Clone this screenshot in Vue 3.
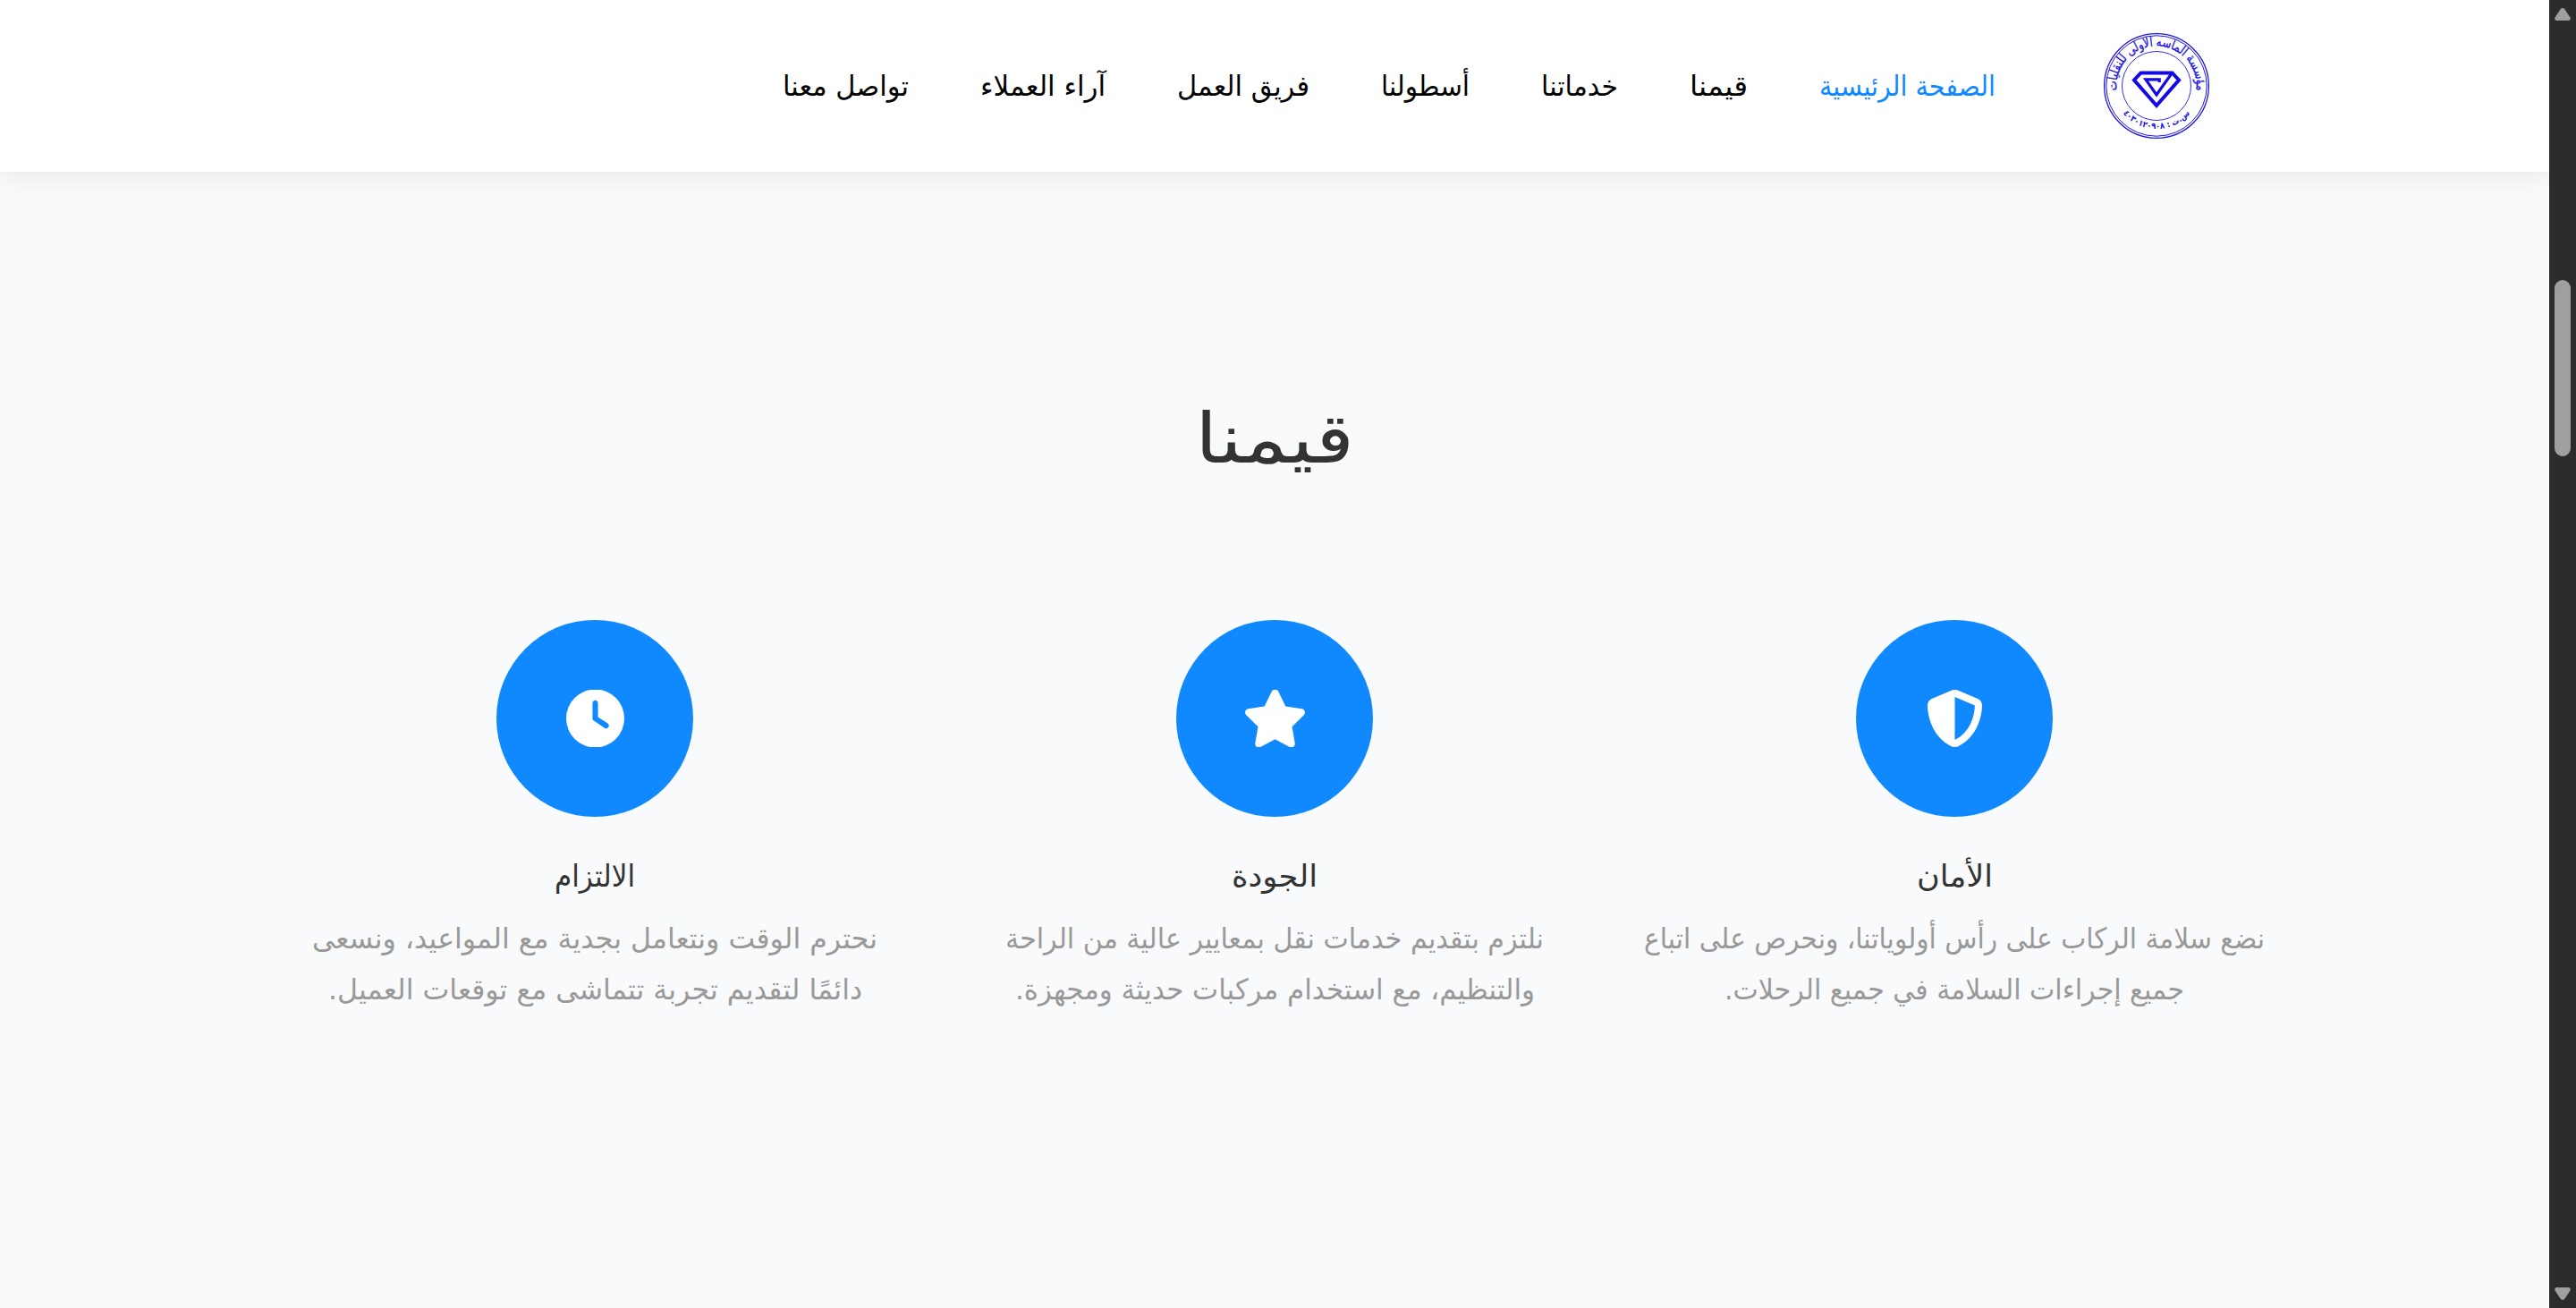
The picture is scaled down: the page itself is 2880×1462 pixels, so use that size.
<script setup>
import { h } from 'vue'

// One line of Arabic text fitted to a fixed measure; `base` is the baseline offset in the line box.
const Line = (p) =>
  h('svg', { width: p.w, height: p.height, viewBox: `0 0 ${p.w} ${p.height}`, style: { display: 'block', overflow: 'visible' } }, [
    h('text', {
      x: p.w / 2, y: p.base, 'font-size': p.size, textLength: p.w, lengthAdjust: 'spacingAndGlyphs',
      'text-anchor': 'middle', direction: 'rtl', fill: 'currentColor'
    }, p.text)
  ])
Line.props = ['text', 'w', 'height', 'base', 'size']

const nav = [
  { text: 'الصفحة الرئيسية', w: 197, active: true },
  { text: 'قيمنا', w: 65 },
  { text: 'خدماتنا', w: 86 },
  { text: 'أسطولنا', w: 99 },
  { text: 'فريق العمل', w: 148 },
  { text: 'آراء العملاء', w: 140 },
  { text: 'تواصل معنا', w: 141 }
]

const values = [
  {
    title: 'الأمان', w: 85, box: '0 4 512 504', iw: 65,
    icon: 'M256 0c4.6 0 9.2 1 13.4 2.9L457.7 82.8c22 9.3 38.4 31 38.3 57.2c-.5 99.2-41.3 280.7-213.6 363.2c-16.7 8-36.1 8-52.8 0C57.3 420.7 16.5 239.2 16 140c-.1-26.2 16.3-47.9 38.3-57.2L242.7 2.9C246.8 1 251.4 0 256 0zm0 66.8V444.8C394 378 431.1 230.1 432 141.4L256 66.8z',
    lines: [
      { text: 'نضع سلامة الركاب على رأس أولوياتنا، ونحرص على اتباع', w: 694 },
      { text: 'جميع إجراءات السلامة في جميع الرحلات.', w: 514 }
    ]
  },
  {
    title: 'الجودة', w: 96, box: '0 4 576 504', iw: 73,
    icon: 'M316.9 18C311.6 7 300.4 0 288.1 0s-23.4 7-28.8 18L195 150.3 51.4 171.5c-12 1.8-22 10.2-25.7 21.7s-.7 24.2 7.9 32.7L137.8 329 113.2 474.7c-2 12 3 24.2 12.9 31.3s23 8 33.8 2.3l128.3-68.5 128.3 68.5c10.8 5.7 23.9 4.9 33.8-2.3s14.9-19.3 12.9-31.3L438.5 329 542.7 225.9c8.6-8.5 11.7-21.2 7.9-32.7s-13.7-19.9-25.7-21.7L381.2 150.3 316.9 18z',
    lines: [
      { text: 'نلتزم بتقديم خدمات نقل بمعايير عالية من الراحة', w: 602 },
      { text: 'والتنظيم، مع استخدام مركبات حديثة ومجهزة.', w: 581 }
    ]
  },
  {
    title: 'الالتزام', w: 90, box: '0 4 512 504', iw: 65,
    icon: 'M256 0a256 256 0 1 1 0 512A256 256 0 1 1 256 0zM232 120V256c0 8 4 15.5 10.7 20l96 64c11 7.4 25.9 4.4 33.3-6.7s4.4-25.9-6.7-33.3L280 243.2V120c0-13.3-10.7-24-24-24s-24 10.7-24 24z',
    lines: [
      { text: 'نحترم الوقت ونتعامل بجدية مع المواعيد، ونسعى', w: 632 },
      { text: 'دائمًا لتقديم تجربة تتماشى مع توقعات العميل.', w: 597 }
    ]
  }
]
</script>

<template>
  <div class="window">
    <div class="page" dir="rtl">
      <header class="header">
        <svg class="logo" width="120" height="120" viewBox="-60 -60 120 120">
          <defs>
            <path id="arc-top" d="M-43 12 A44.600 44.600 0 1 1 43 12" />
            <path id="arc-bottom" d="M-48 9 A49 49 0 0 0 48 9" />
          </defs>
          <g fill="none" stroke="#1c14e4">
            <circle r="58.400" stroke-width="1.300" />
            <circle r="56.200" stroke-width="1" />
            <circle r="38.500" stroke-width=".9" />
          </g>
          <g fill="none" stroke="#1209e6">
            <path d="M-17.500 -14.500H17.500L25 -6.500L0 22L-25 -6.500Z" stroke-width="4" />
            <path d="M17 -14L0 10L-12 -7.200H3.200V-4" stroke-width="3.200" />
          </g>
          <g fill="#1c14e4" direction="rtl" text-anchor="middle">
            <text font-size="15" stroke="#1c14e4" stroke-width=".3"><textPath href="#arc-top" startOffset="50%" textLength="150" lengthAdjust="spacingAndGlyphs">مؤسسة الماسه الاولى للنقليات</textPath></text>
            <text font-size="9.500" font-weight="bold" letter-spacing="3.300"><textPath href="#arc-bottom" startOffset="50%">س.ت : ٤٠٣٠١٢٠٩٠٨</textPath></text>
          </g>
        </svg>
        <nav class="nav">
          <a v-for="n in nav" :key="n.text" :class="{ active: n.active }">
            <Line :text="n.text" :w="n.w" :height="48" :base="35" :size="31" />
          </a>
        </nav>
      </header>
      <main class="section">
        <h2><Line text="قيمنا" :w="178" :height="100" :base="75" :size="77" /></h2>
        <div class="grid">
          <article v-for="v in values" :key="v.title" class="card">
            <div class="disc">
              <svg :width="v.iw" height="64" :viewBox="v.box" fill="#fff"><path :d="v.icon" /></svg>
            </div>
            <h3><Line :text="v.title" :w="v.w" :height="56" :base="38" :size="34" /></h3>
            <p>
              <Line v-for="l in v.lines" :key="l.text" :text="l.text" :w="l.w" :height="57" :base="37.500" :size="32" />
            </p>
          </article>
        </div>
      </main>
    </div>
    <aside class="scrollbar">
      <svg width="18" height="14" viewBox="0 0 18 14"><path d="M6.500 1.500Q9 -1.300 11.500 1.500L17.500 10.500Q18.500 14 15.500 14H2.500Q-.5 14 .5 10.500Z" /></svg>
      <div class="track"><div class="thumb"></div></div>
      <svg width="18" height="14" viewBox="0 0 18 14"><path d="M6.500 12.500Q9 15.300 11.500 12.500L17.500 3.500Q18.500 0 15.500 0H2.500Q-.5 0 .5 3.500Z" /></svg>
    </aside>
  </div>
</template>

<style>
body { margin: 0; overflow: hidden; }
</style>

<style scoped>
.window {
  display: flex;
  width: 2880px;
  height: 1462px;
  font-family: "DejaVu Sans Condensed", "DejaVu Sans", sans-serif;
  font-stretch: condensed;
}
.page {
  display: flex;
  flex-direction: column;
  width: 2850px;
  background: #f8fafc;
}
.header {
  display: flex;
  align-items: center;
  box-sizing: border-box;
  height: 192px;
  padding-right: 379px;
  background: #fff;
  box-shadow: 0 0 30px rgba(0, 0, 0, 0.1);
}
.nav {
  display: flex;
  gap: 80px;
  margin-right: 120px;
  color: #000;
}
.nav .active { color: #1089ff; }
.section {
  display: flex;
  flex-direction: column;
  align-items: center;
  padding-top: 250px;
}
h2, h3, p { margin: 0; font-weight: normal; }
h2 { color: #333; }
.grid {
  display: grid;
  grid-template-columns: repeat(3, 760px);
  margin-top: 151px;
}
.card {
  display: flex;
  flex-direction: column;
  align-items: center;
}
.disc {
  display: flex;
  align-items: center;
  justify-content: center;
  width: 220px;
  height: 220px;
  border-radius: 50%;
  background: #1089ff;
}
h3 {
  margin-top: 40px;
  color: #333;
}
p {
  display: flex;
  flex-direction: column;
  align-items: center;
  margin-top: 13px;
  color: #999;
}
.scrollbar {
  display: flex;
  flex-direction: column;
  align-items: center;
  box-sizing: border-box;
  width: 30px;
  padding: 9px 0;
  background: #2c2c2c;
  fill: #9f9f9f;
}
.track { flex: 1; padding-top: 290px; }
.thumb {
  width: 18px;
  height: 197px;
  border-radius: 9px;
  background: #9f9f9f;
}
</style>
